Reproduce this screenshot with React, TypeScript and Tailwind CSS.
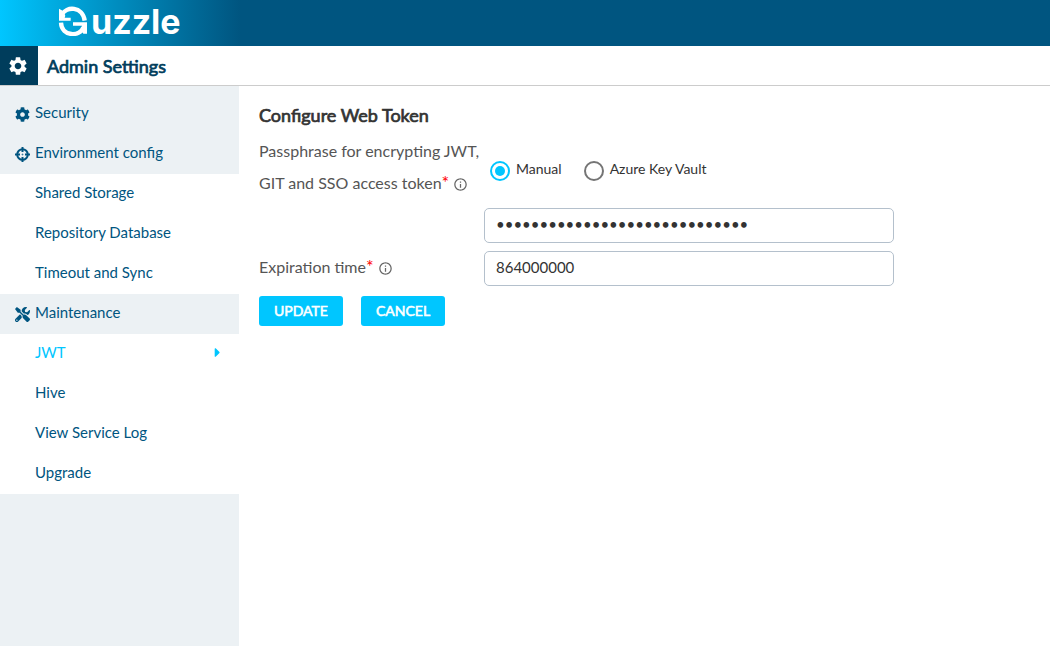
import { useState, type ReactNode } from "react";
import { MdSettings, MdInfoOutline } from "react-icons/md";
import { FaCaretRight, FaCog, FaTools } from "react-icons/fa";

function Logo() {
  return (
    <a href="#home" aria-label="Guzzle" className="flex items-start text-white">
      <svg viewBox="12 12 90 90" className="mt-[6px] h-[30px] w-[30px]" fill="none" stroke="currentColor" strokeWidth="13">
        <path d="M24 38C36 12 86 12 92 56" />
        <path d="M15 20L26 26L34 41L32 47H50V56H15Z" fill="currentColor" stroke="none" />
        <path d="M21 62C23 106 80 104 88 76" />
        <path d="M57 61H99V95H88L80 82L84 71H57Z" fill="currentColor" stroke="none" />
      </svg>
      <span className="pt-[5px] pl-[3px] font-[Inter,sans-serif] text-[34px] leading-[34px] font-bold">uzzle</span>
    </a>
  );
}

function TargetIcon() {
  return (
    <svg viewBox="0 0 15 15" className="h-[15px] w-[15px]" fill="none" stroke="currentColor">
      <circle cx="7.500" cy="7.500" r="5.300" strokeWidth="2" />
      <path d="M7.500 0V5M7.500 10V15M0 7.500H5M10 7.500H15" strokeWidth="2" />
      <path d="M7.500 6.500V8.500M6.500 7.500H8.500" strokeWidth="1" opacity="0.5" />
    </svg>
  );
}

type Item = { label: string; icon?: ReactNode; active?: boolean };

const items: Item[] = [
  { label: "Security", icon: <FaCog size={15} /> },
  { label: "Environment config", icon: <TargetIcon /> },
  { label: "Shared Storage" },
  { label: "Repository Database" },
  { label: "Timeout and Sync" },
  { label: "Maintenance", icon: <FaTools size={15} /> },
  { label: "JWT", active: true },
  { label: "Hive" },
  { label: "View Service Log" },
  { label: "Upgrade" },
];

function NavItem({ label, icon, active }: Item) {
  return (
    <li className={icon ? "bg-[#ecf1f4]" : "bg-white"}>
      <a
        href={"#" + label.toLowerCase().replaceAll(" ", "-")}
        aria-current={active ? "page" : undefined}
        className={`flex h-10 items-center pr-[14px] pb-1 pl-[14px] text-[15px] ${active ? "text-[#00c6ff]" : "text-[#005580]"}`}
      >
        <span className="flex w-[21px] shrink-0 justify-center pt-1 pr-1">{icon}</span>
        <span className="flex-1">{label}</span>
        {active && <FaCaretRight size={15} />}
      </a>
    </li>
  );
}

function Hint() {
  return (
    <>
      <span className="text-[18px] leading-none text-[#ff0000]">*</span>
      <MdInfoOutline size={15} className="ml-1 inline-block align-[-3px] text-[#666666]" />
    </>
  );
}

function RadioOption({ label, checked, onSelect }: { label: string; checked: boolean; onSelect: () => void }) {
  return (
    <label className="flex items-center gap-[6px] text-[14px] text-[#333333]">
      <span className="grid h-5 w-5 place-items-center">
        <input
          type="radio"
          name="source"
          checked={checked}
          onChange={onSelect}
          className="peer col-start-1 row-start-1 h-5 w-5 appearance-none rounded-full border-2 border-[#757575] checked:border-[#00c6ff]"
        />
        <span className="pointer-events-none col-start-1 row-start-1 h-[10px] w-[10px] rounded-full peer-checked:bg-[#00c6ff]" />
      </span>
      <span className="pb-1">{label}</span>
    </label>
  );
}

const field =
  "h-[35px] w-full max-w-[410px] rounded-[5px] border border-[#b4c0cc] bg-white px-[11px] pb-[3px] text-[15px] text-[#333333] outline-none";
const strong = "[-webkit-text-stroke:0.04em_currentColor]";
const button = `h-[30px] rounded-[3px] bg-[#00c6ff] px-[15px] pb-[2px] text-[14px] text-white ${strong}`;

export default function App() {
  const [source, setSource] = useState("manual");
  const [secret, setSecret] = useState("passphrase-for-web-token-0001");
  const [expiry, setExpiry] = useState("864000000");
  return (
    <div className="flex min-h-screen flex-col bg-white font-[Lato,sans-serif]">
      <header className="h-[46px] bg-[#005580] bg-linear-to-r from-[#00c6ff] to-[#005580] to-[240px] pl-[58px]">
        <Logo />
      </header>
      <div className="flex h-10 items-center border-b border-[#cccccc]">
        <div className="grid h-full w-[38px] place-items-center bg-[#003d5c] pr-[2px] text-white">
          <MdSettings size={22} />
        </div>
        <h1 className={`pt-px pl-[9px] text-[18px] text-[#003d5c] ${strong}`}>Admin Settings</h1>
      </div>
      <div className="flex flex-1">
        <nav className="w-[239px] shrink-0 bg-[#ecf1f4] pt-2" aria-label="Settings">
          <ul>
            {items.map((item) => (
              <NavItem key={item.label} {...item} />
            ))}
          </ul>
        </nav>
        <main className="min-w-0 flex-1 px-5 pt-[15px]">
          <h2 className={`text-[18px] leading-7 text-[#333333] ${strong}`}>Configure Web Token</h2>
          <form onSubmit={(e) => e.preventDefault()}>
            <div className="grid grid-cols-[225px_minmax(0,1fr)] items-center gap-y-2 pt-[6px] text-[#555555]">
              <label htmlFor="secret" className="pb-px text-[16px] leading-8">
                Passphrase for encrypting JWT, GIT and SSO access token
                <Hint />
              </label>
              <div className="flex gap-[22px] pt-[6px] pl-[6px]">
                <RadioOption label="Manual" checked={source === "manual"} onSelect={() => setSource("manual")} />
                <RadioOption label="Azure Key Vault" checked={source === "vault"} onSelect={() => setSource("vault")} />
              </div>
              <input
                id="secret"
                type="password"
                value={secret}
                onChange={(e) => setSecret(e.target.value)}
                className={`${field} col-start-2`}
              />
              <label htmlFor="expiry" className="pb-1 text-[16px]">
                Expiration time
                <Hint />
              </label>
              <input id="expiry" value={expiry} onChange={(e) => setExpiry(e.target.value)} className={field} />
            </div>
            <div className="flex gap-[18px] pt-[10px]">
              <button type="submit" className={button}>UPDATE</button>
              <button type="button" className={button}>CANCEL</button>
            </div>
          </form>
        </main>
      </div>
    </div>
  );
}
